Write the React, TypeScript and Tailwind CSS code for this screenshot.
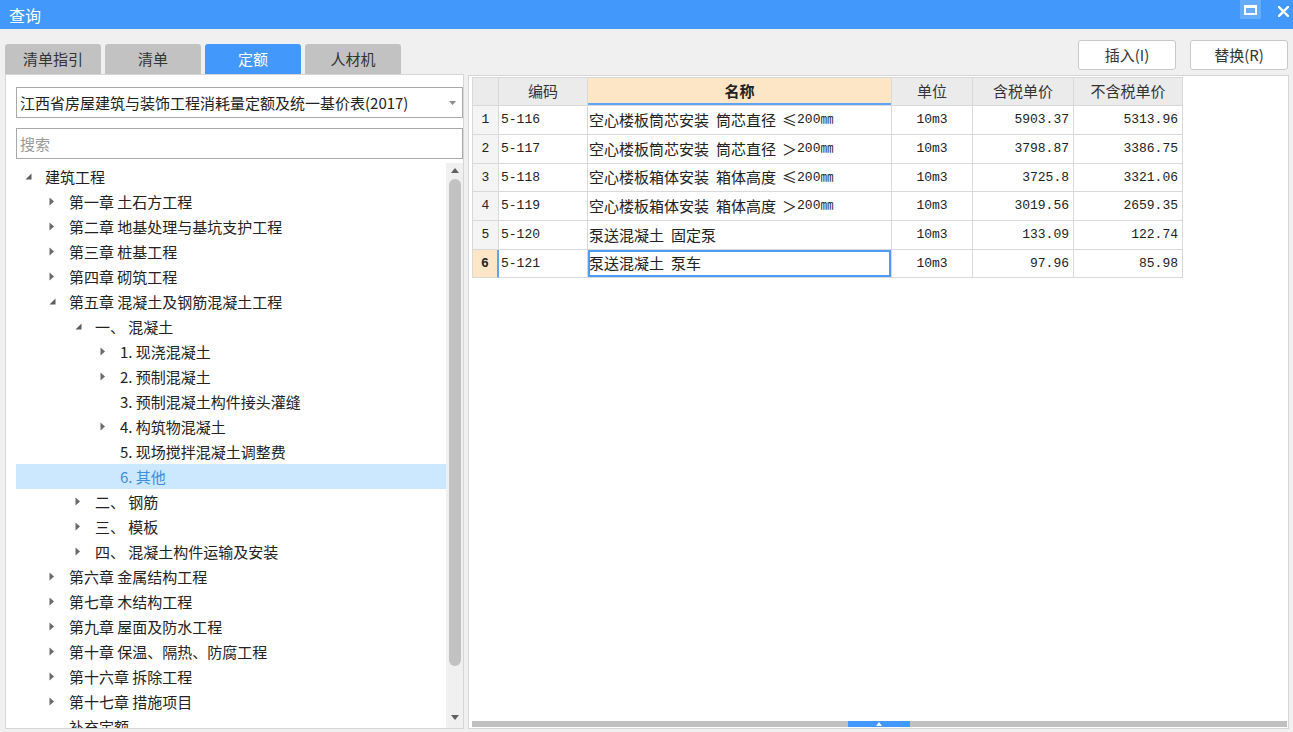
import React from "react";

const cjk = "font-['Noto_Sans_CJK_SC','Microsoft_YaHei',sans-serif]";
const mono = "font-['Liberation_Mono','Noto_Sans_CJK_SC',monospace]";

type Node = { label: string; level: number; state: "open" | "closed" | "leaf"; selected?: boolean };

const tree: Node[] = [
    { label: "建筑工程", level: 0, state: "open" },
    { label: "第一章 土石方工程", level: 1, state: "closed" },
    { label: "第二章 地基处理与基坑支护工程", level: 1, state: "closed" },
    { label: "第三章 桩基工程", level: 1, state: "closed" },
    { label: "第四章 砌筑工程", level: 1, state: "closed" },
    { label: "第五章 混凝土及钢筋混凝土工程", level: 1, state: "open" },
    { label: "一、 混凝土", level: 2, state: "open" },
    { label: "1. 现浇混凝土", level: 3, state: "closed" },
    { label: "2. 预制混凝土", level: 3, state: "closed" },
    { label: "3. 预制混凝土构件接头灌缝", level: 3, state: "leaf" },
    { label: "4. 构筑物混凝土", level: 3, state: "closed" },
    { label: "5. 现场搅拌混凝土调整费", level: 3, state: "leaf" },
    { label: "6. 其他", level: 3, state: "leaf", selected: true },
    { label: "二、 钢筋", level: 2, state: "closed" },
    { label: "三、 模板", level: 2, state: "closed" },
    { label: "四、 混凝土构件运输及安装", level: 2, state: "closed" },
    { label: "第六章 金属结构工程", level: 1, state: "closed" },
    { label: "第七章 木结构工程", level: 1, state: "closed" },
    { label: "第九章 屋面及防水工程", level: 1, state: "closed" },
    { label: "第十章 保温、隔热、防腐工程", level: 1, state: "closed" },
    { label: "第十六章 拆除工程", level: 1, state: "closed" },
    { label: "第十七章 措施项目", level: 1, state: "closed" },
    { label: "补充定额", level: 1, state: "leaf" },
];

const indent = ["pl-0", "pl-[24px]", "pl-[50px]", "pl-[75px]"];

const rows = [
    { no: "1", code: "5-116", a: "空心楼板筒芯安装", b: "筒芯直径", sym: "≤", size: "200㎜", tax: "5903.37", notax: "5313.96", h: "h-[29px]" },
    { no: "2", code: "5-117", a: "空心楼板筒芯安装", b: "筒芯直径", sym: "＞", size: "200㎜", tax: "3798.87", notax: "3386.75", h: "h-[29px]" },
    { no: "3", code: "5-118", a: "空心楼板箱体安装", b: "箱体高度", sym: "≤", size: "200㎜", tax: "3725.8", notax: "3321.06", h: "h-[28px]" },
    { no: "4", code: "5-119", a: "空心楼板箱体安装", b: "箱体高度", sym: "＞", size: "200㎜", tax: "3019.56", notax: "2659.35", h: "h-[29px]" },
    { no: "5", code: "5-120", a: "泵送混凝土", b: "固定泵", sym: "", size: "", tax: "133.09", notax: "122.74", h: "h-[29px]" },
    { no: "6", code: "5-121", a: "泵送混凝土", b: "泵车", sym: "", size: "", tax: "97.96", notax: "85.98", h: "h-[28px]" },
];

const TreeIcon = ({ state }: { state: Node["state"] }) => {
    if (state === "open") {
        return (
            <svg width="7" height="7" viewBox="0 0 7 7">
                <polygon points="6.5,0.5 6.5,6.5 0.5,6.5" fill="#5c5c5c" />
            </svg>
        );
    }
    if (state === "closed") {
        return (
            <svg width="6" height="9" viewBox="0 0 6 9">
                <polygon points="0.5,0.5 5,4.5 0.5,8.5" fill="#6a6a6a" />
            </svg>
        );
    }
    return null;
};

export default function App() {
    return (
        <div className={`w-[1293px] h-[732px] bg-[#f0f0f0] overflow-hidden flex flex-col [text-spacing-trim:space-all] ${cjk}`}>
            {/* title bar */}
            <div className="h-[29px] bg-[#4398fc] flex items-center justify-between">
                <span className="pl-[9px] text-white text-[16px] leading-none">查询</span>
                <div className="flex items-start h-full">
                    <div className="w-[21px] h-[19px] bg-[#65acfd] flex items-center justify-center">
                        <svg width="13" height="10" viewBox="0 0 13 10">
                            <rect x="1" y="1.5" width="11" height="7.5" fill="none" stroke="#fff" strokeWidth="2" />
                            <rect x="0" y="0" width="13" height="3" fill="#fff" />
                        </svg>
                    </div>
                    <div className="w-[17px]" />
                    <div className="pt-[6px] pr-[4px]">
                        <svg width="11" height="11" viewBox="0 0 11 11">
                            <path d="M1 1 L10 10 M10 1 L1 10" stroke="#fff" strokeWidth="2.4" strokeLinecap="square" />
                        </svg>
                    </div>
                </div>
            </div>

            <div className="flex flex-1">
                {/* left column */}
                <div className="w-[464px] pl-[5px] pt-[15px] flex flex-col">
                    <div className="flex gap-[4px] h-[30px]">
                        {["清单指引", "清单", "定额", "人材机"].map((t) => (
                            <div
                                key={t}
                                className={`w-[96px] h-full rounded-t-[3px] flex items-center justify-center text-[15px] ${
                                    t === "定额" ? "bg-[#4398fc] text-white" : "bg-[#c2c2c2] text-[#333]"
                                }`}
                            >
                                {t}
                            </div>
                        ))}
                    </div>
                    <div className="w-[459px] h-[655px] bg-white border border-[#d6d6d6] pl-[10px] pt-[12px] flex flex-col">
                        <div className="h-[31px] border border-[#a9a9a9] flex items-center justify-between pl-[3px] pr-[6px]">
                            <span className="text-[15px] text-[#222] leading-none">江西省房屋建筑与装饰工程消耗量定额及统一基价表(2017)</span>
                            <svg width="7" height="4" viewBox="0 0 7 4">
                                <polygon points="0,0 7,0 3.5,4" fill="#8a8a8a" />
                            </svg>
                        </div>
                        <div className="h-[31px] mt-[10px] border border-[#a9a9a9] flex items-center pl-[3px]">
                            <span className="text-[15px] text-[#9a9a9a] leading-none">搜索</span>
                        </div>
                        <div className="flex flex-1 mt-[4px] min-h-0">
                            <div className="flex-1 overflow-hidden pt-[1px]">
                                {tree.map((n) => (
                                    <div
                                        key={n.label}
                                        className={`h-[25px] flex items-center ${indent[n.level]} ${n.selected ? "bg-[#cce8ff]" : ""}`}
                                    >
                                        <div className="w-[29px] pl-[9px] flex items-center">
                                            <TreeIcon state={n.state} />
                                        </div>
                                        <span
                                            className={`text-[15px] leading-none whitespace-pre ${
                                                n.selected ? "text-[#3d8ee0]" : "text-[#222]"
                                            }`}
                                        >
                                            {n.label}
                                        </span>
                                    </div>
                                ))}
                            </div>
                            <div className="w-[17px] bg-[#f0f0f0] flex flex-col items-center pt-[5px] pb-[8px]">
                                <svg width="8" height="5" viewBox="0 0 8 5">
                                    <polygon points="4,0 8,5 0,5" fill="#606060" />
                                </svg>
                                <div className="w-[12px] h-[487px] mt-[6px] rounded-full bg-[#c2c2c2]" />
                                <div className="flex-1" />
                                <svg width="8" height="5" viewBox="0 0 8 5">
                                    <polygon points="0,0 8,0 4,5" fill="#606060" />
                                </svg>
                            </div>
                        </div>
                    </div>
                </div>

                {/* right column */}
                <div className="flex-1 ml-[4px] mr-[4px] flex flex-col">
                    <div className="pt-[11px] flex justify-end gap-[14px] pr-[1px]">
                        {["插入(I)", "替换(R)"].map((b) => (
                            <div
                                key={b}
                                className="w-[98px] h-[30px] bg-white border border-[#c9c9c9] rounded-[3px] flex items-center justify-center text-[15px] text-[#333]"
                            >
                                {b}
                            </div>
                        ))}
                    </div>
                    <div className="mt-[5px] h-[654px] bg-white border border-[#d6d6d6] flex flex-col pl-[3px] pt-[1px]">
                        <div className="flex flex-col border-l border-t border-[#d9d9d9] w-[711px]">
                            <div className="flex h-[28px] text-[15px] text-[#333]">
                                <div className="w-[26px] bg-[#ebebeb] border-r border-b border-[#d9d9d9]" />
                                <div className="w-[89px] bg-[#ebebeb] border-r border-b border-[#d9d9d9] flex items-center justify-center">编码</div>
                                <div className="w-[304px] bg-[#fde6c6] border-r border-b border-[#d9d9d9] shadow-[inset_0_-2px_0_#5ca4f7] flex items-center justify-center font-bold text-[#222]">名称</div>
                                <div className="w-[81px] bg-[#ebebeb] border-r border-b border-[#d9d9d9] flex items-center justify-center">单位</div>
                                <div className="w-[101px] bg-[#ebebeb] border-r border-b border-[#d9d9d9] flex items-center justify-center">含税单价</div>
                                <div className="w-[109px] bg-[#ebebeb] border-r border-b border-[#d9d9d9] flex items-center justify-center">不含税单价</div>
                            </div>
                            {rows.map((r) => {
                                const sel = r.no === "6";
                                return (
                                    <div key={r.no} className={`flex ${r.h} text-[#222]`}>
                                        <div
                                            className={`w-[26px] border-b border-[#d9d9d9] flex items-center justify-center text-[13px] ${mono} ${
                                                sel ? "bg-[#fde6c6] font-bold border-r-2 border-r-[#5ca4f7]" : "bg-[#f4f4f4] border-r"
                                            }`}
                                        >
                                            {r.no}
                                        </div>
                                        <div className={`w-[89px] border-r border-b border-[#d9d9d9] flex items-center pl-[2px] text-[13px] ${mono}`}>
                                            {r.code}
                                        </div>
                                        <div
                                            className={`w-[304px] border-r border-b border-[#d9d9d9] flex items-center pl-[1px] text-[15px] whitespace-nowrap ${
                                                sel ? "shadow-[inset_0_0_0_2px_#4a9cf6]" : ""
                                            }`}
                                        >
                                            <span>{r.a}</span>
                                            <span className="ml-[7px]">{r.b}</span>
                                            {r.sym && <span className="ml-[6px]">{r.sym}</span>}
                                            {r.size && <span className={`text-[13px] ${mono}`}>{r.size}</span>}
                                        </div>
                                        <div className={`w-[81px] border-r border-b border-[#d9d9d9] flex items-center justify-center text-[13px] ${mono}`}>
                                            10m3
                                        </div>
                                        <div className={`w-[101px] border-r border-b border-[#d9d9d9] flex items-center justify-end pr-[4px] text-[13px] ${mono}`}>
                                            {r.tax}
                                        </div>
                                        <div className={`w-[109px] border-r border-b border-[#d9d9d9] flex items-center justify-end pr-[4px] text-[13px] ${mono}`}>
                                            {r.notax}
                                        </div>
                                    </div>
                                );
                            })}
                        </div>
                        <div className="flex-1" />
                        <div className="h-[6px] mb-[1px] mr-[1px] bg-[#c0c0c0] flex">
                            <div className="w-[376px]" />
                            <div className="w-[62px] h-full bg-[#4398fc] flex items-center justify-center">
                                <svg width="6" height="4" viewBox="0 0 6 4">
                                    <polygon points="3,0 6,4 0,4" fill="#fff" />
                                </svg>
                            </div>
                        </div>
                    </div>
                </div>
            </div>
        </div>
    );
}
